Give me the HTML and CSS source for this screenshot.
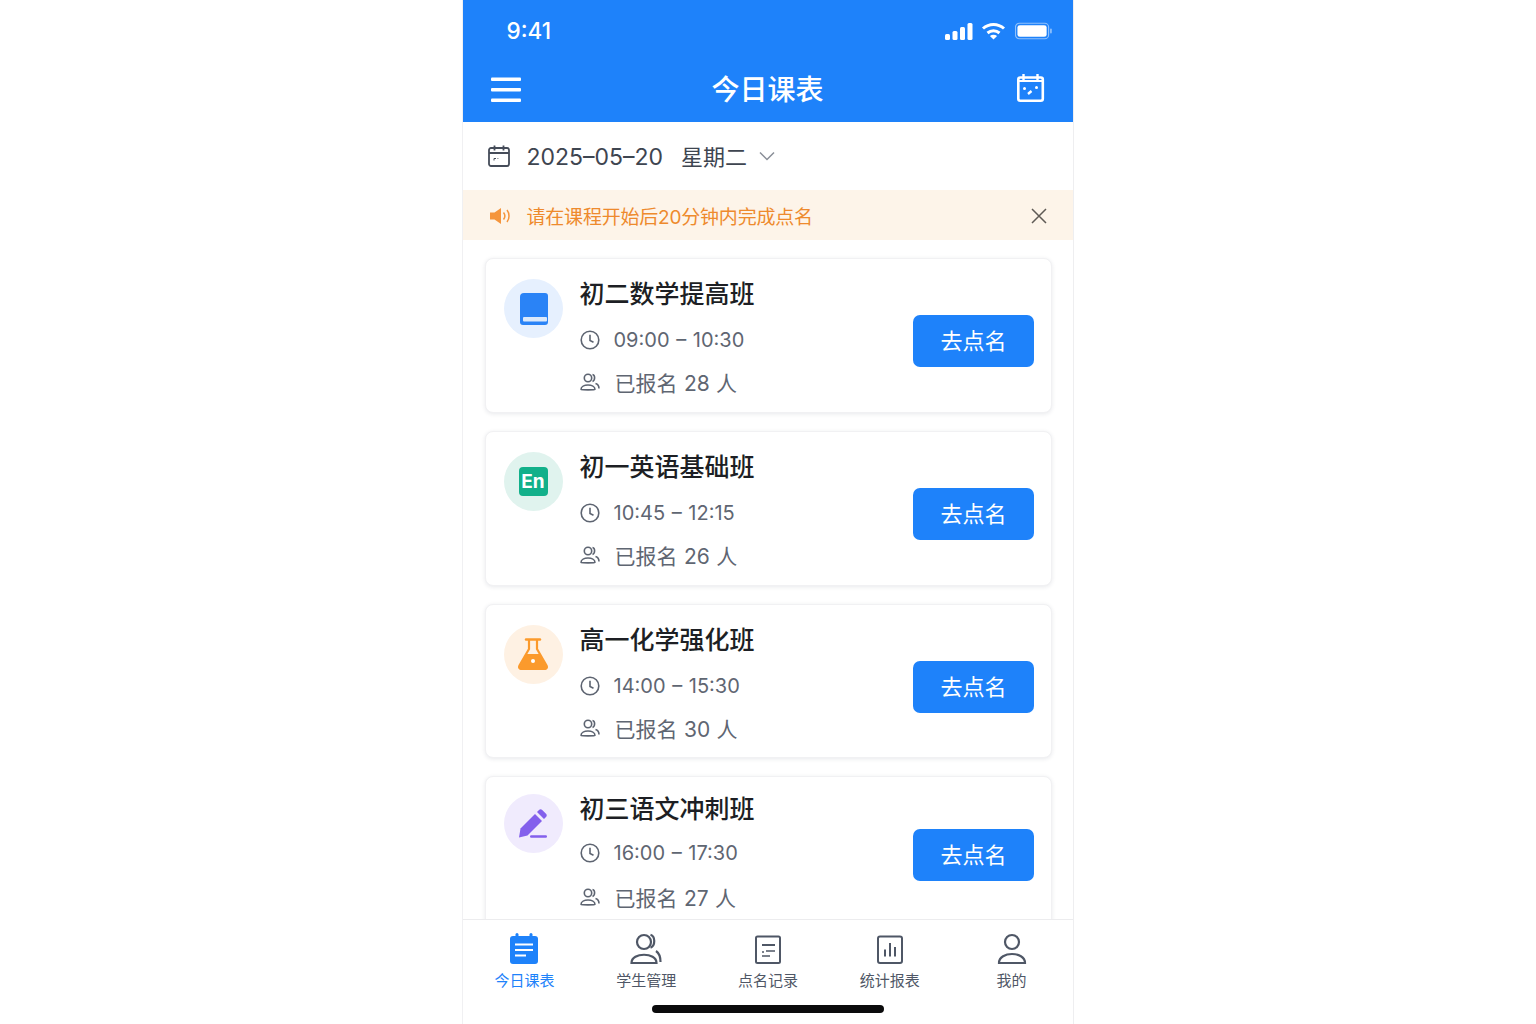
FILE: index.html
```html
<!DOCTYPE html>
<html lang="zh-CN">
<head>
<meta charset="utf-8">
<title>今日课表</title>
<link rel="stylesheet" href="styles.css">
</head>
<body>
<div class="phone">
  <header class="header">
    <div class="status">
      <span class="clock">9:41</span>
      <div class="status-icons">
        <svg class="si-signal" width="28" height="17" viewBox="0 0 28 17"><rect x="0" y="11" width="5" height="6" rx="1.500" fill="#fff"/><rect x="7.500" y="8" width="5" height="9" rx="1.500" fill="#fff"/><rect x="15" y="4" width="5" height="13" rx="1.500" fill="#fff"/><rect x="22.500" y="0" width="5" height="17" rx="1.500" fill="#fff"/></svg>
        <svg class="si-wifi" width="25" height="18" viewBox="0 0 24 18" fill="none" stroke="#fff" stroke-width="3"><path d="M1.500 6.500C7.500 1 16.500 1 22.500 6.500"/><path d="M6 11c3.500-3 8.500-3 12 0"/><path d="M12 17.500l-3.600-3.600c2.100-1.500 5.100-1.500 7.200 0z" fill="#fff" stroke="none"/></svg>
        <svg class="si-battery" width="37" height="18" viewBox="0 0 38 18"><rect x="0.500" y="1" width="34" height="16" rx="4" fill="none" stroke="#8fc0fb" stroke-width="1.200"/><rect x="2.500" y="3" width="30" height="12" rx="2.500" fill="#fff"/><rect x="36" y="6.500" width="1.800" height="5" rx="0.900" fill="#8fc0fb"/></svg>
      </div>
    </div>
    <div class="navbar">
      <svg width="32" height="26" viewBox="0 0 32 26"><rect x="1" y="0.500" width="30" height="3.600" rx="1" fill="#fff"/><rect x="1" y="11" width="30" height="3.600" rx="1" fill="#fff"/><rect x="1" y="21.500" width="30" height="3.600" rx="1" fill="#fff"/></svg>
      <h1 class="nav-title">今日课表</h1>
      <svg class="nav-cal" width="32" height="30" viewBox="0 0 32 30" fill="none" stroke="#fff" stroke-width="2.600"><rect x="5.300" y="3.500" width="24.500" height="23.300" rx="2"/><path d="M10.500 0v6M24.500 0v6" stroke-width="2.400"/><path d="M5 7h25" stroke-width="2"/><circle cx="11.500" cy="14.500" r="1.500" fill="#fff" stroke="none"/><circle cx="23.500" cy="13.500" r="1.500" fill="#fff" stroke="none"/><path d="M15 20l3.500-3" stroke-width="2.400"/></svg>
    </div>
  </header>

  <div class="datebar">
    <svg width="24" height="24" viewBox="0 0 24 24" fill="none" stroke="#454c59" stroke-width="1.800"><rect x="2" y="4" width="20" height="18" rx="2"/><path d="M2 9h20M7.500 1.500v5M16.500 1.500v5"/><path d="M7 14.500h2M7 14.500v2M10.500 14.500h.8" stroke-width="1"/></svg>
    <span class="date">2025–05–20</span>
    <span class="weekday">星期二</span>
    <svg class="chev" width="16" height="10" viewBox="0 0 16 10" fill="none" stroke="#8a8f98" stroke-width="1.500"><path d="M1 1.500l7 7 7-7"/></svg>
  </div>

  <div class="notice">
    <svg class="notice-icon" width="22" height="18" viewBox="0 0 22 18"><path d="M0 5.500h4.500L11 1v16l-6.500-4.500H0z" fill="#f5953c"/><path d="M13.500 5.500c1.600 2 1.600 5 0 7M17 3c2.700 3.400 2.700 8.600 0 12" fill="none" stroke="#f5953c" stroke-width="1.500"/></svg>
    <span class="notice-text">请在课程开始后20分钟内完成点名</span>
    <svg class="notice-icon" width="18" height="18" viewBox="0 0 18 18" fill="none" stroke="#5f5a55" stroke-width="1.500"><path d="M2 2l14 14M16 2L2 16"/></svg>
  </div>

  <main class="list">
    <article class="card">
      <div class="badge badge-blue">
        <svg width="30" height="32" viewBox="-1 0 30 32"><path d="M5 0h21a3 3 0 0 1 3 3v26a3 3 0 0 1-3 3H4a3 3 0 0 1-3-3V4a4 4 0 0 1 4-4z" fill="#2a83f6"/><rect x="4" y="24" width="24" height="4.500" rx="1" fill="#dbe9fb"/></svg>
      </div>
      <div class="info">
        <h2 class="name">初二数学提高班</h2>
        <div class="row row-time">
          <svg class="row-icon" width="20" height="20" viewBox="0 0 20 20" fill="none" stroke="#5d6471" stroke-width="1.600"><circle cx="10" cy="10" r="8.800"/><path d="M10 4.800V10.500l3.500 1.800"/></svg>
          <span>09:00 – 10:30</span>
        </div>
        <div class="row row-people">
          <svg class="row-icon" width="20" height="18" viewBox="0 0 20 18" fill="none" stroke="#5d6471" stroke-width="1.600"><circle cx="8" cy="5" r="3.700"/><path d="M1 16.500c0-6 14-6 14 0 0 .5-14 .5-14 0z"/><path d="M12.500 1.500c2.800.5 2.800 6 0 7M15.500 10.500c2 .6 3.500 2.500 3.500 5"/></svg>
          <span>已报名 28 人</span>
        </div>
      </div>
      <button class="action">去点名</button>
    </article>

    <article class="card">
      <div class="badge badge-green">
        <span class="en">En</span>
      </div>
      <div class="info">
        <h2 class="name">初一英语基础班</h2>
        <div class="row row-time">
          <svg class="row-icon" width="20" height="20" viewBox="0 0 20 20" fill="none" stroke="#5d6471" stroke-width="1.600"><circle cx="10" cy="10" r="8.800"/><path d="M10 4.800V10.500l3.500 1.800"/></svg>
          <span>10:45 – 12:15</span>
        </div>
        <div class="row row-people">
          <svg class="row-icon" width="20" height="18" viewBox="0 0 20 18" fill="none" stroke="#5d6471" stroke-width="1.600"><circle cx="8" cy="5" r="3.700"/><path d="M1 16.500c0-6 14-6 14 0 0 .5-14 .5-14 0z"/><path d="M12.500 1.500c2.800.5 2.800 6 0 7M15.500 10.500c2 .6 3.500 2.500 3.500 5"/></svg>
          <span>已报名 26 人</span>
        </div>
      </div>
      <button class="action">去点名</button>
    </article>

    <article class="card">
      <div class="badge badge-orange">
        <svg width="30" height="32" viewBox="0 0 30 32"><path d="M8 1.500h14" stroke="#fb9a2c" stroke-width="2.400" stroke-linecap="round"/><path d="M11 2v9L1.500 27.500C0.500 29.500 1.500 31 3.500 31h23c2 0 3-1.500 2-3.500L19 11V2" fill="none" stroke="#fb9a2c" stroke-width="2.200"/><path d="M8 16h14l6.500 12.500c.5 1.500 0 2.500-2 2.500h-23c-2 0-2.500-1-2-2.500z" fill="#fb9a2c"/><circle cx="15" cy="23" r="2" fill="#fff"/></svg>
      </div>
      <div class="info">
        <h2 class="name">高一化学强化班</h2>
        <div class="row row-time">
          <svg class="row-icon" width="20" height="20" viewBox="0 0 20 20" fill="none" stroke="#5d6471" stroke-width="1.600"><circle cx="10" cy="10" r="8.800"/><path d="M10 4.800V10.500l3.500 1.800"/></svg>
          <span>14:00 – 15:30</span>
        </div>
        <div class="row row-people">
          <svg class="row-icon" width="20" height="18" viewBox="0 0 20 18" fill="none" stroke="#5d6471" stroke-width="1.600"><circle cx="8" cy="5" r="3.700"/><path d="M1 16.500c0-6 14-6 14 0 0 .5-14 .5-14 0z"/><path d="M12.500 1.500c2.800.5 2.800 6 0 7M15.500 10.500c2 .6 3.500 2.500 3.500 5"/></svg>
          <span>已报名 30 人</span>
        </div>
      </div>
      <button class="action">去点名</button>
    </article>

    <article class="card card-tight">
      <div class="badge badge-purple">
        <svg width="30" height="32" viewBox="0 0 30 32"><path d="M2.500 20.500L17 6l7 7L9.500 27.500 1 29.500z" fill="#8360ec"/><path d="M19 4l2-2c1-1 2.200-1 3.200 0l3.800 3.800c1 1 1 2.200 0 3.200l-2 2z" fill="#8360ec"/><rect x="12" y="27.300" width="17" height="2.400" rx="1.200" fill="#8360ec"/></svg>
      </div>
      <div class="info">
        <h2 class="name">初三语文冲刺班</h2>
        <div class="row row-time">
          <svg class="row-icon" width="20" height="20" viewBox="0 0 20 20" fill="none" stroke="#5d6471" stroke-width="1.600"><circle cx="10" cy="10" r="8.800"/><path d="M10 4.800V10.500l3.500 1.800"/></svg>
          <span>16:00 – 17:30</span>
        </div>
        <div class="row row-people">
          <svg class="row-icon" width="20" height="18" viewBox="0 0 20 18" fill="none" stroke="#5d6471" stroke-width="1.600"><circle cx="8" cy="5" r="3.700"/><path d="M1 16.500c0-6 14-6 14 0 0 .5-14 .5-14 0z"/><path d="M12.500 1.500c2.800.5 2.800 6 0 7M15.500 10.500c2 .6 3.500 2.500 3.500 5"/></svg>
          <span>已报名 27 人</span>
        </div>
      </div>
      <button class="action">去点名</button>
    </article>
  </main>

  <nav class="tabbar">
    <div class="tab tab-active">
      <svg width="30" height="32" viewBox="0 0 30 32"><rect x="1" y="3" width="28" height="28" rx="3" fill="#1e82fa"/><rect x="6.500" y="0" width="3" height="6" rx="1.500" fill="#1e82fa"/><rect x="20.500" y="0" width="3" height="6" rx="1.500" fill="#1e82fa"/><path d="M6 11.500h18M6 17h18M6 22.500h11" stroke="#fff" stroke-width="2"/></svg>
      <span>今日课表</span>
    </div>
    <div class="tab">
      <svg width="32" height="32" viewBox="0 0 32 32" fill="none" stroke="#4f5766" stroke-width="2.200"><circle cx="14" cy="9" r="7"/><path d="M1.500 30c0-11 25-11 25 0z"/><path d="M20.500 1.800c5 1.500 5 11 0 13M26 18c3 2 4.500 5.500 4.500 11"/></svg>
      <span>学生管理</span>
    </div>
    <div class="tab">
      <svg width="30" height="32" viewBox="0 0 30 32" fill="none" stroke="#4f5766" stroke-width="2"><rect x="3" y="3.500" width="24" height="26.500" rx="1.500"/><path d="M9 12h13"/><path d="M9 19h2M13 18h9M9 23h8" stroke-width="1.500"/></svg>
      <span>点名记录</span>
    </div>
    <div class="tab">
      <svg width="30" height="32" viewBox="0 0 30 32" fill="none" stroke="#4f5766" stroke-width="2"><rect x="3" y="3.500" width="24" height="26.500" rx="2"/><path d="M10 16.500v7M15 10v13.500M20 14v9.500"/></svg>
      <span>统计报表</span>
    </div>
    <div class="tab">
      <svg width="30" height="32" viewBox="0 0 30 32" fill="none" stroke="#4f5766" stroke-width="2.200"><circle cx="15" cy="9" r="7"/><path d="M2 30c0-12 26-12 26 0z"/></svg>
      <span>我的</span>
    </div>
  </nav>
  <div class="home-bar"></div>
</div>
</body>
</html>
```

FILE: styles.css
```css
* { box-sizing: border-box; }
html, body { margin: 0; height: 100%; }
body {
  background: #fff;
  display: flex;
  justify-content: center;
  overflow: hidden;
  font-family: Inter, "Noto Sans CJK SC", sans-serif;
}
.phone {
  position: relative;
  width: 612px;
  height: 1024px;
  margin-left: -1px;
  background: #fff;
  border-left: 1px solid #f0f0f2;
  border-right: 1px solid #eeeef0;
  display: flex;
  flex-direction: column;
  overflow: hidden;
}
.header {
  height: 122px;
  flex: none;
  background: #1e82fa;
  color: #fff;
}
.status {
  height: 60px;
  padding: 21px 21px 0 44px;
  display: flex;
  justify-content: space-between;
  align-items: flex-start;
}
.clock { font-size: 22.500px; line-height: 20px; font-weight: 500; }
.status-icons { display: flex; align-items: center; height: 20px; }
.si-wifi { margin-left: 8px; }
.si-battery { margin-left: 9px; }
.navbar {
  height: 60px;
  padding: 0 27px;
  display: flex;
  align-items: center;
  justify-content: space-between;
}
.nav-title {
  margin: 0;
  font-size: 28px;
  font-weight: 500;
  line-height: 1;
}
.nav-cal { margin-bottom: 3px; }
.datebar {
  height: 68px;
  flex: none;
  display: flex;
  align-items: center;
  padding-left: 24px;
  color: #3e4550;
}
.date { font-size: 23px; margin-left: 16px; padding-top: 2px; }
.weekday { font-size: 22px; margin-left: 18px; padding-bottom: 2px; }
.chev { margin-left: 12px; }
.notice {
  height: 50px;
  flex: none;
  background: #fdf4e9;
  display: flex;
  align-items: center;
  padding: 0 25px 0 27px;
  color: #ee8a2d;
  font-size: 19px;
  letter-spacing: -0.200px;
}
.notice-icon { flex: none; margin-top: 2px; }
.notice-text { margin-left: 15px; flex: 1; }
.list {
  flex: 1;
  min-height: 0;
  overflow: hidden;
  padding: 18px 21px 0 22px;
  display: flex;
  flex-direction: column;
  gap: 18px;
}
.card {
  flex: none;
  height: 154.800px;
  background: #fff;
  border: 1px solid #f1f1f3;
  border-radius: 8px;
  box-shadow: 0 1px 4px rgba(30, 40, 70, .1);
  display: flex;
  padding: 20px 17px 0 18px;
}
.badge {
  flex: none;
  width: 59px;
  height: 59px;
  border-radius: 50%;
  display: flex;
  align-items: center;
  justify-content: center;
}
.badge-blue { background: #e6f0fe; }
.badge-green { background: #e0f3ee; }
.badge-orange { background: #fef1e3; }
.badge-purple { background: #f0ebfd; }
.en {
  width: 29px;
  height: 29px;
  border-radius: 4px;
  background: #12b08a;
  color: #fff;
  font-size: 19px;
  font-weight: 700;
  display: flex;
  align-items: center;
  justify-content: center;
}
.info { flex: 1; margin-left: 17px; }
.name {
  margin: 0;
  font-size: 25px;
  font-weight: 500;
  line-height: 30px;
  color: #1d1f24;
}
.row {
  height: 30px;
  display: flex;
  align-items: center;
  color: #5f6672;
  font-size: 21px;
}
.row-time { margin-top: 16px; font-size: 20px; word-spacing: 1px; }
.row-people { margin-top: 12px; word-spacing: 0.500px; }
.row-icon { flex: none; margin-right: 14px; }
.row-people .row-icon { margin-right: 15px; }
.action {
  flex: none;
  align-self: flex-start;
  margin-top: 36px;
  width: 121px;
  height: 52px;
  border: 0;
  border-radius: 7px;
  background: #1e82fa;
  color: #fff;
  font-family: inherit;
  font-size: 22px;
  padding: 0 0 4px 1px;
}
.card-tight { padding-top: 17px; }
.card-tight .row-time { margin-top: 14px; }
.card-tight .row-people { margin-top: 14px; }
.card-tight .action { margin-top: 35px; }
.tabbar {
  position: relative;
  flex: none;
  height: 105px;
  background: #fff;
  border-top: 1px solid #ececee;
  display: grid;
  grid-template-columns: repeat(5, 1fr);
  padding: 13px 0 0 1px;
}
.tab {
  display: flex;
  flex-direction: column;
  align-items: center;
  gap: 5px;
  font-size: 15px;
  line-height: 22px;
  color: #4f5766;
}
.tab-active { color: #1e82fa; }
.home-bar {
  position: absolute;
  left: 189px;
  bottom: 11px;
  width: 232px;
  height: 8px;
  border-radius: 4px;
  background: #0b0b0c;
}
```
